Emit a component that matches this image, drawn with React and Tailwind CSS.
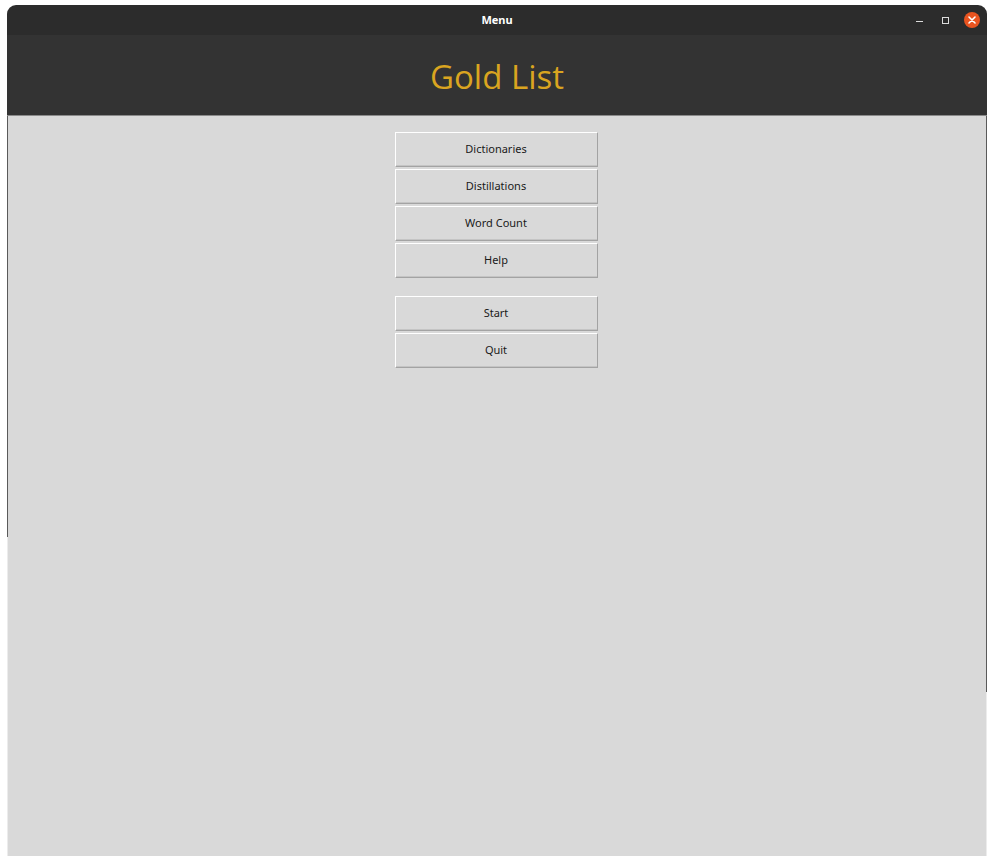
const MENU = ['Dictionaries', 'Distillations', 'Word Count', 'Help']
const ACTIONS = ['Start', 'Quit']

function TkButton({ label }) {
  return (
    <button className="w-[203px] h-[35px] bg-[#d9d9d9] border border-t-white border-l-white border-r-[#a3a3a3] border-b-[#a3a3a3] shadow-[inset_0_-1px_0_#c4c4c4] text-[11px] text-[#1a1a1a] font-['Noto_Sans',sans-serif]">
      {label}
    </button>
  )
}

export default function App() {
  return (
    <div className="bg-white h-[856px] pt-[5px] px-[7px] flex flex-col font-['Noto_Sans',sans-serif]">
      <div className="flex-1 flex flex-col">
        {/* title bar */}
        <div className="h-[30px] bg-[#2c2c2c] rounded-t-[9px] flex items-center relative">
          <span className="flex-1 text-center text-white text-[11px] font-bold">Menu</span>
          <div className="absolute right-[7px] top-0 h-full flex items-center">
            <span className="w-[7px] h-px bg-[#dcdcdc] mt-[3px]"></span>
            <span className="w-[7px] h-[7px] border border-[#dcdcdc] ml-[19px]"></span>
            <span className="w-[16px] h-[16px] rounded-full bg-[#e95420] flex items-center justify-center ml-[15px]">
              <svg width="8" height="8" viewBox="0 0 8 8">
                <path d="M1 1L7 7M7 1L1 7" stroke="white" strokeWidth="1.6" strokeLinecap="round" />
              </svg>
            </span>
          </div>
        </div>

        {/* header */}
        <div className="h-[81px] bg-[#333333] border-b border-[#8a8a8a] flex items-center justify-center">
          <span className="text-[#daa520] text-[33px] font-medium font-['Open_Sans',sans-serif] leading-none pt-[2px]">Gold List</span>
        </div>

        {/* body */}
        <div className="h-[421px] bg-[#d9d9d9] border-x border-[#5a5a5a] flex flex-col items-center pt-[16px]">
          <div className="flex flex-col gap-[2px] mr-[2px]">
            {MENU.map(m => <TkButton key={m} label={m} />)}
          </div>
          <div className="flex flex-col gap-[2px] mt-[18px] mr-[2px]">
            {ACTIONS.map(a => <TkButton key={a} label={a} />)}
          </div>
        </div>
        <div className="h-[155px] bg-[#d9d9d9] border-l border-l-[#ececec] border-r border-r-[#5a5a5a]"></div>
        <div className="flex-1 bg-[#d9d9d9] border-x border-[#ececec]"></div>
      </div>
    </div>
  )
}
